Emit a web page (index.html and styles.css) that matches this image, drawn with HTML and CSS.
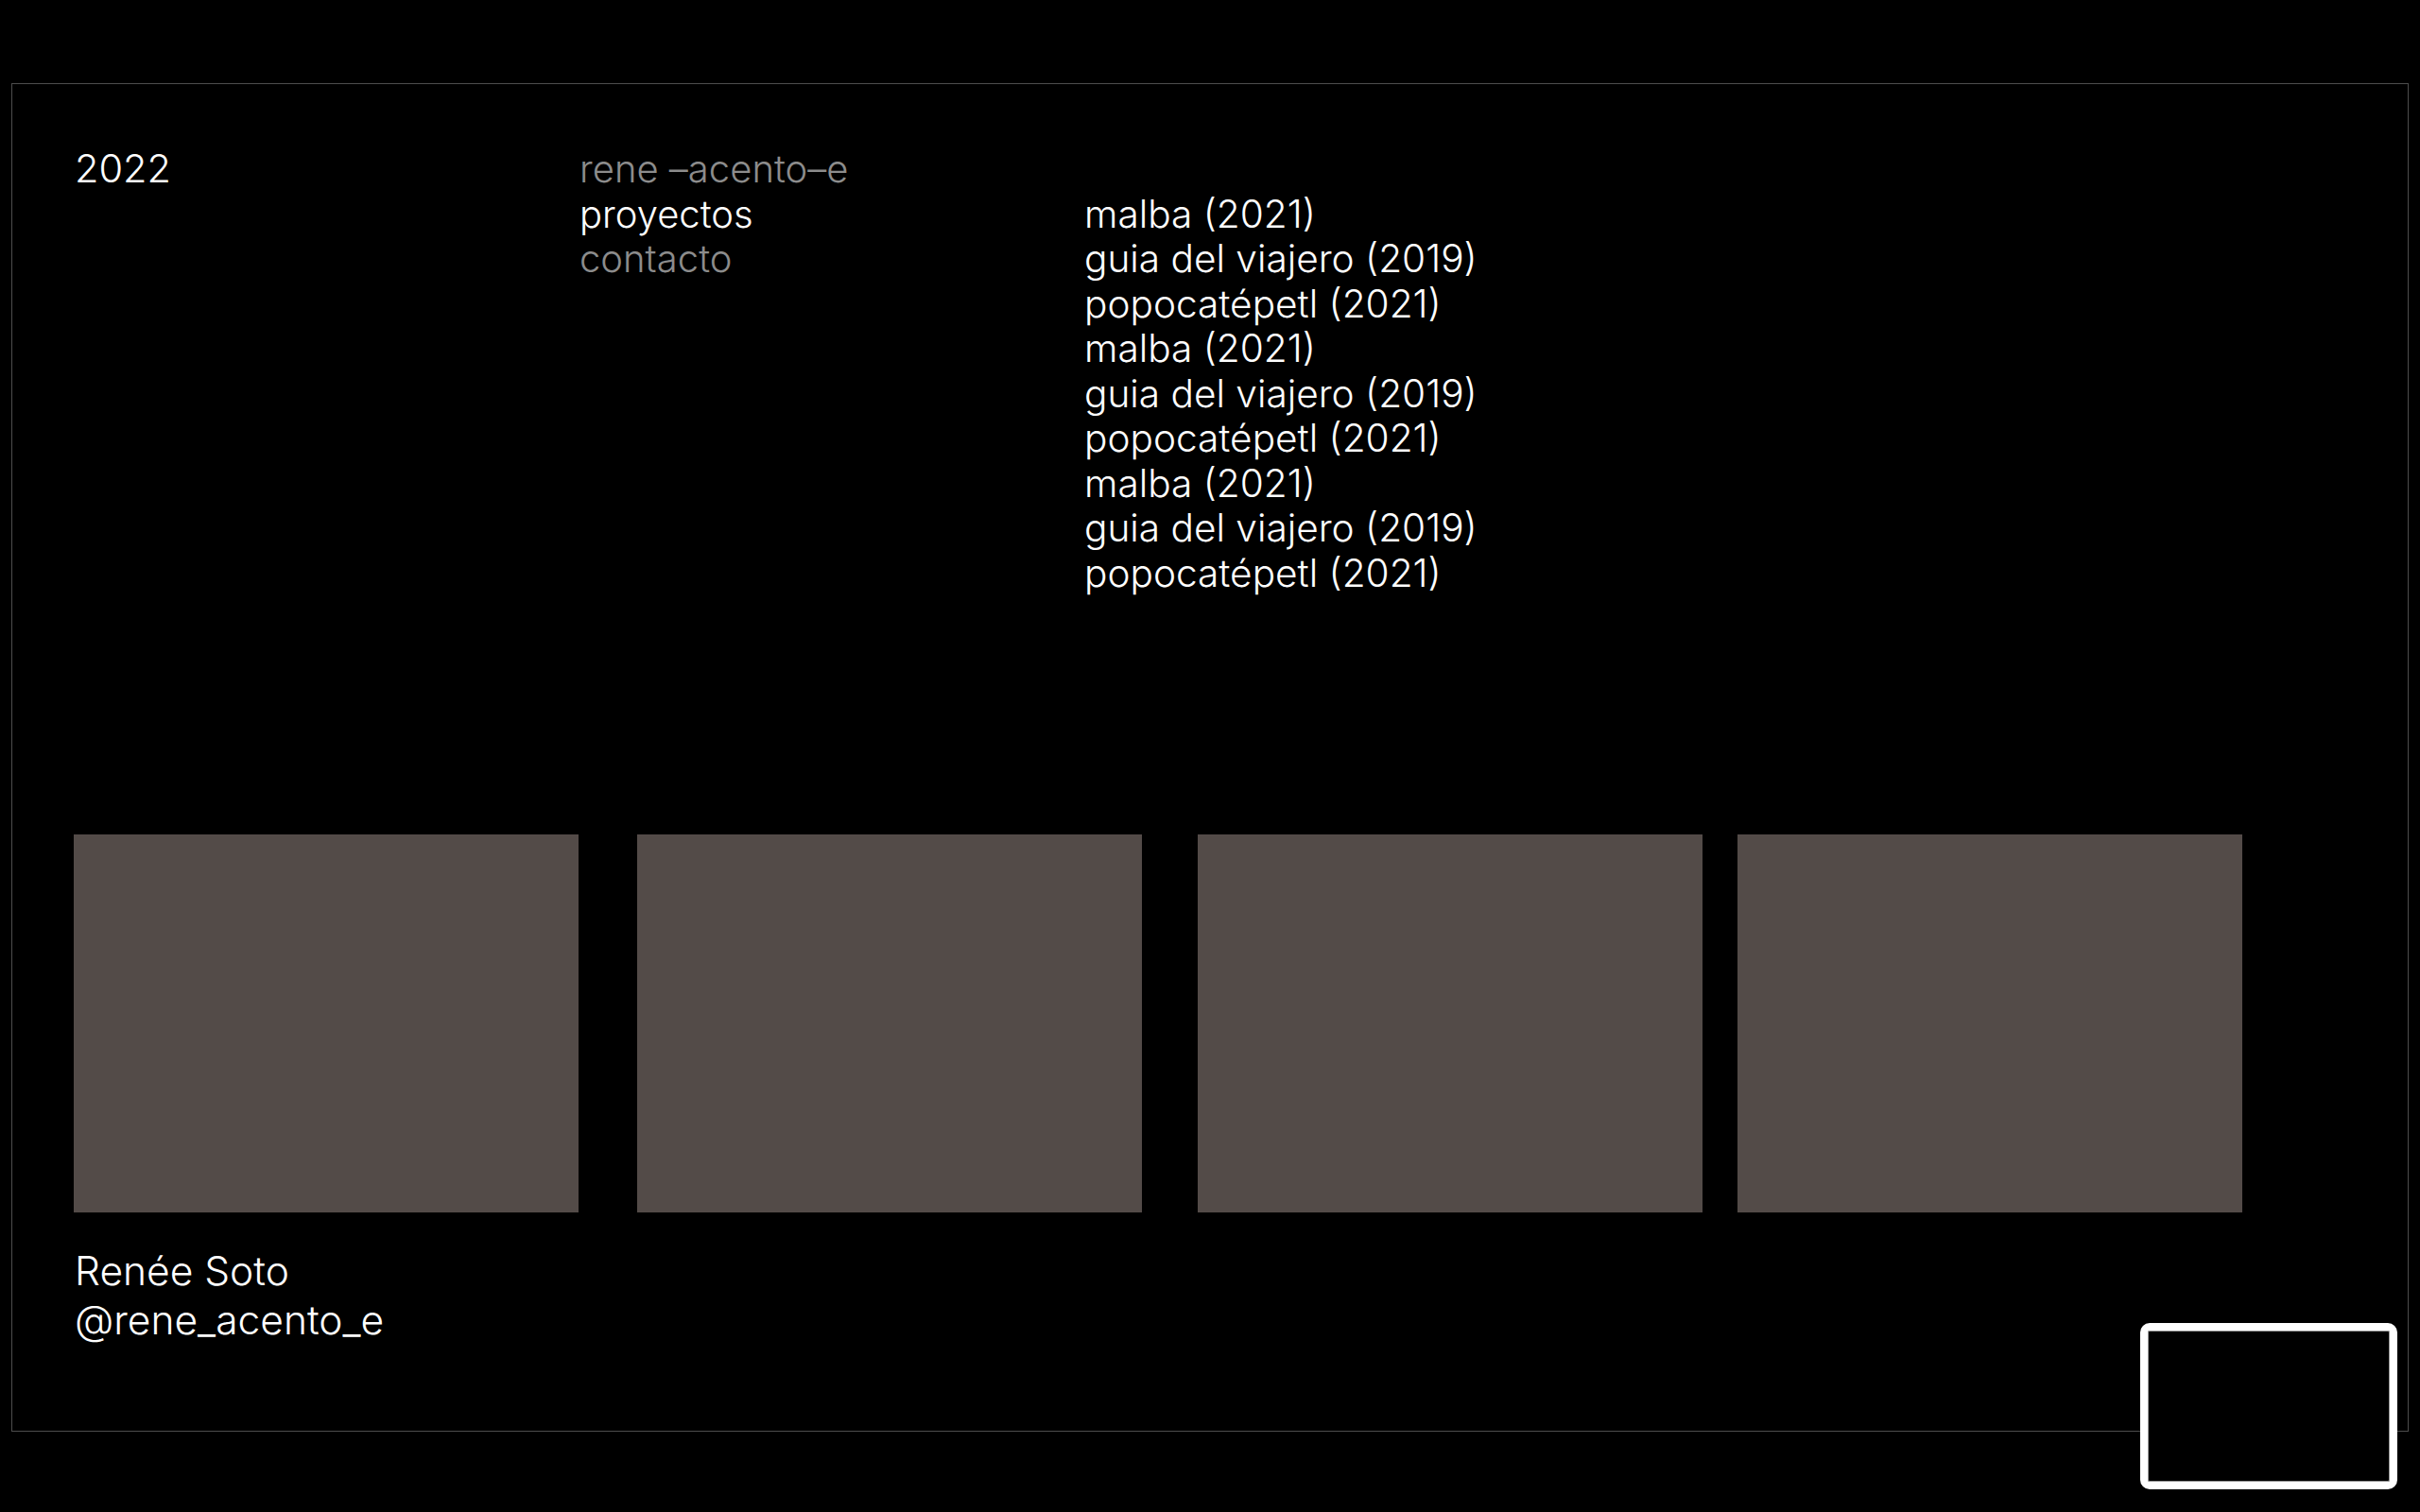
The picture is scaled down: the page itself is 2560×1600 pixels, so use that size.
FILE: index.html
```html
<!DOCTYPE html>
<html lang="es">
<head>
<meta charset="utf-8">
<title>Renée Soto — proyectos</title>
<link rel="stylesheet" href="styles.css">
</head>
<body>
<main class="frame">
  <header class="top">
    <div class="year">2022</div>
    <nav class="nav">
      <a class="nav-item muted">rene –acento–e</a>
      <a class="nav-item">proyectos</a>
      <a class="nav-item muted">contacto</a>
    </nav>
    <ul class="projects">
      <li>malba (2021)</li>
      <li>guia del viajero (2019)</li>
      <li>popocatépetl (2021)</li>
      <li>malba (2021)</li>
      <li>guia del viajero (2019)</li>
      <li>popocatépetl (2021)</li>
      <li>malba (2021)</li>
      <li>guia del viajero (2019)</li>
      <li>popocatépetl (2021)</li>
    </ul>
  </header>
  <section class="gallery">
    <div class="tile"></div>
    <div class="tile"></div>
    <div class="tile"></div>
    <div class="tile"></div>
  </section>
  <footer class="foot">
    <div>Renée Soto</div>
    <div>@rene_acento_e</div>
  </footer>
</main>
<div class="overlay-box"></div>
</body>
</html>
```

FILE: styles.css
```css
html, body {
  margin: 0;
  padding: 0;
  background: #000;
  color: #fff;
  font-family: Inter, "Noto Sans", "Liberation Sans", sans-serif;
  font-weight: 300;
}

body {
  width: 2560px;
  height: 1600px;
  position: relative;
  overflow: hidden;
}

.frame {
  box-sizing: border-box;
  margin: 88px 12px 0 12px;
  height: 1427px;
  border: 1px solid #4d4d4d;
  padding: 66px 65px 0 65px;
  display: flex;
  flex-direction: column;
}

.top {
  display: grid;
  grid-template-columns: 534px 534px 1fr;
  font-size: 40px;
  line-height: 47.5px;
  height: 475px;
  padding-left: 1px;
}

.year {
  font-size: 41.5px;
}

.nav {
  display: flex;
  flex-direction: column;
}

.nav-item {
  color: #fff;
  text-decoration: none;
}

.nav-item.muted {
  color: #8c8c8c;
}

.projects {
  list-style: none;
  margin: 47.5px 0 0 0;
  padding: 0;
  font-size: 40.6px;
}

.gallery {
  display: flex;
  margin-top: 253px;
  height: 400px;
}

.tile {
  width: 534px;
  height: 400px;
  background: #534b48;
  flex: none;
}

.tile:nth-child(2) { margin-left: 62px; }
.tile:nth-child(3) { margin-left: 59px; }
.tile:nth-child(4) { margin-left: 37px; }

.foot {
  margin-top: 36px;
  padding-left: 1px;
  font-size: 42.5px;
  line-height: 52px;
}

.overlay-box {
  position: absolute;
  left: 2264px;
  top: 1400px;
  width: 272px;
  height: 176px;
  box-sizing: border-box;
  border: 8px solid #fff;
  border-radius: 10px;
  background: #000;
  box-shadow: inset 0 0 0 1px #9a9a9a;
}
```
